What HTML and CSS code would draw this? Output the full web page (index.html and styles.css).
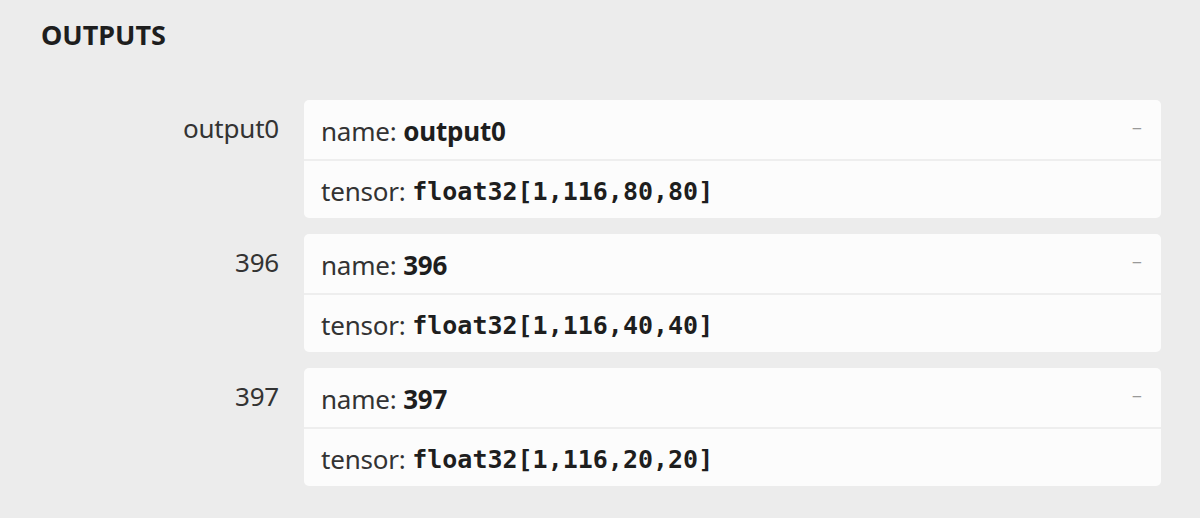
FILE: index.html
```html
<!DOCTYPE html>
<html>
<head>
<meta charset="utf-8">
<link rel="stylesheet" href="styles.css">
</head>
<body>
<div class="sidebar">
  <div class="section-title">OUTPUTS</div>
  <div class="list">
    <div class="item">
      <div class="label">output0</div>
      <div class="card">
        <div class="row"><span>name: <b>output0</b></span><span class="toggle">&minus;</span></div>
        <div class="row">tensor:&nbsp;<code>float32[1,116,80,80]</code></div>
      </div>
    </div>
    <div class="item">
      <div class="label">396</div>
      <div class="card">
        <div class="row"><span>name: <b>396</b></span><span class="toggle">&minus;</span></div>
        <div class="row">tensor:&nbsp;<code>float32[1,116,40,40]</code></div>
      </div>
    </div>
    <div class="item">
      <div class="label">397</div>
      <div class="card">
        <div class="row"><span>name: <b>397</b></span><span class="toggle">&minus;</span></div>
        <div class="row">tensor:&nbsp;<code>float32[1,116,20,20]</code></div>
      </div>
    </div>
  </div>
</div>
</body>
</html>
```
FILE: styles.css
```css
html, body {
  margin: 0;
  padding: 0;
  background: #ececec;
}
body {
  font-family: "Segoe UI", "Noto Sans", "Open Sans", sans-serif;
  color: #333;
  width: 1200px;
  height: 518px;
  overflow: hidden;
}
.sidebar {
  padding: 16px 39px 0 41px;
}
.section-title {
  font-weight: 700;
  font-size: 27px;
  line-height: 38px;
  color: #1e1e1e;
}
.list {
  display: flex;
  flex-direction: column;
  gap: 16px;
  margin-top: 46px;
}
.item {
  display: flex;
  gap: 25px;
  align-items: flex-start;
}
.label {
  width: 238px;
  text-align: right;
  font-size: 26px;
  line-height: 59px;
  color: #333;
  margin-top: -1px;
  letter-spacing: -0.2px;
}
.card {
  flex: 1;
  background: #fcfcfc;
  border-radius: 5px;
  overflow: hidden;
}
.row {
  display: flex;
  align-items: center;
  height: 58px;
  padding: 3px 17px 0;
  box-sizing: border-box;
  font-size: 26px;
  color: #333;
  letter-spacing: -0.2px;
}
.row:first-child {
  height: 59px;
  justify-content: space-between;
}
.row + .row {
  height: 59px;
  border-top: 2px solid #eeeeee;
}
.row b {
  font-weight: 700;
  color: #1e1e1e;
}
.row code {
  font-family: "DejaVu Sans Mono", "Liberation Mono", monospace;
  font-weight: 700;
  font-size: 25px;
  letter-spacing: 0;
  color: #1e1e1e;
}
.toggle {
  color: #999;
  font-size: 18px;
  margin-right: 2px;
  margin-top: -6px;
  letter-spacing: 0;
}
```
